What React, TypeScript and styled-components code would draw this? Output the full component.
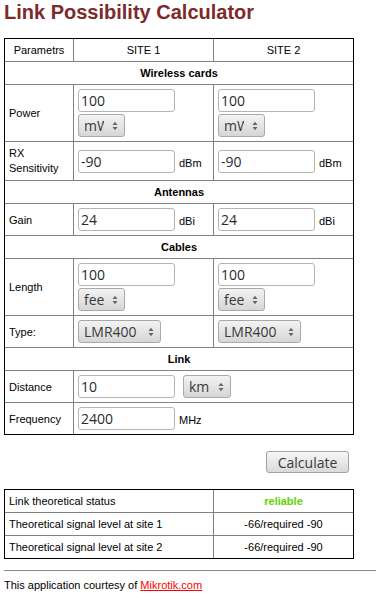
import React, { useState } from 'react';
import styled, { createGlobalStyle } from 'styled-components';

const GlobalStyle = createGlobalStyle`
  body {
    margin: 0 0 0 4px;
    background: #fff;
    color: #000;
    font-family: "Liberation Sans", Arial, sans-serif;
    font-size: 11px;
    overflow: hidden;
  }
`;

const Title = styled.h1`
  margin: 1px 0 14px;
  font-size: 20px;
  line-height: 23px;
  font-weight: bold;
  color: #7d2a2a;
`;

const Grid = styled.table`
  width: 350px;
  table-layout: fixed;
  border-collapse: separate;
  border-spacing: 0;
  border: 1px solid #000;
  box-sizing: border-box;

  tr:last-child > td {
    border-bottom: none;
  }
`;

const Col = styled.col<{ $w: number }>`
  width: ${(p) => p.$w}px;
`;

const Cell = styled.td<{ $align?: string; $bold?: boolean }>`
  border-right: 1px solid #808080;
  border-bottom: 1px solid #808080;
  padding: 4px;
  line-height: 14px;
  font-size: 11px;
  text-align: ${(p) => p.$align || 'left'};
  font-weight: ${(p) => (p.$bold ? 'bold' : 'normal')};
  vertical-align: middle;

  &:last-child {
    border-right: none;
  }
`;

const WrapLabel = styled.span`
  line-height: 15px;
`;

const Stack = styled.div`
  display: flex;
  flex-direction: column;
  align-items: flex-start;
  gap: 2px;
`;

const Row = styled.div<{ $gap: number }>`
  display: flex;
  align-items: baseline;
  gap: ${(p) => p.$gap}px;
`;

const TextInput = styled.input`
  box-sizing: border-box;
  width: 97px;
  height: 23px;
  padding: 0 2px;
  border: 1px solid #b4b4b4;
  border-radius: 3px;
  background: #fff;
  font-family: "Open Sans", "DejaVu Sans", sans-serif;
  font-size: 14px;
  color: #2b2b2b;
  outline: none;
`;

const Unit = styled.span`
  font-size: 11px;
`;

const SelectBox = styled.span`
  position: relative;
  display: inline-block;
`;

const Select = styled.select<{ $w: number }>`
  appearance: none;
  -webkit-appearance: none;
  box-sizing: border-box;
  width: ${(p) => p.$w}px;
  height: 23px;
  padding: 0 20px 0 5px;
  border: 1px solid #a9a9a9;
  border-radius: 3px;
  background: linear-gradient(#f3f3f3, #d6d6d6);
  font-family: "Open Sans", "DejaVu Sans", sans-serif;
  font-size: 14px;
  color: #3a3a3a;
  outline: none;
`;

const Arrows = styled.svg`
  position: absolute;
  right: 7px;
  top: 50%;
  transform: translateY(-50%);
  pointer-events: none;
`;

const Actions = styled.div`
  width: 350px;
  display: flex;
  justify-content: flex-end;
  box-sizing: border-box;
  padding-right: 5px;
  margin: 16px 0;
`;

const Button = styled.button`
  box-sizing: border-box;
  width: 83px;
  height: 22px;
  padding: 0;
  border: 1px solid #a2a2a2;
  border-radius: 3px;
  background: linear-gradient(#f7f7f7, #d9d9d9);
  font-family: "Open Sans", "DejaVu Sans", sans-serif;
  font-size: 14px;
  color: #3a3a3a;
`;

const Status = styled.span`
  color: #5fd400;
  font-weight: bold;
`;

const Rule = styled.div`
  margin-top: 11px;
  border-top: 1px solid #888;
`;

const Footer = styled.p`
  margin: 8px 0 0;
  font-size: 11px;
  line-height: 13px;
`;

const Link = styled.a`
  color: #f00;
  text-decoration: underline;
`;

function Dropdown({ width, value, options }: { width: number; value: string; options: string[] }) {
  const [v, setV] = useState(value);
  return (
    <SelectBox>
      <Select $w={width} value={v} onChange={(e) => setV(e.target.value)}>
        {options.map((o) => (
          <option key={o} value={o}>{o}</option>
        ))}
      </Select>
      <Arrows width="6" height="12" viewBox="0 0 6 12">
        <path d="M0.5 5 L3 1.8 L5.5 5 Z" fill="#666" />
        <path d="M0.5 7 L3 10.2 L5.5 7 Z" fill="#666" />
      </Arrows>
    </SelectBox>
  );
}

function Field({ value }: { value: string }) {
  const [v, setV] = useState(value);
  return <TextInput type="text" value={v} onChange={(e) => setV(e.target.value)} />;
}

function Section({ title }: { title: string }) {
  return (
    <tr>
      <Cell colSpan={3} $align="center" $bold>{title}</Cell>
    </tr>
  );
}

function PowerCell() {
  return (
    <Cell>
      <Stack>
        <Field value="100" />
        <Dropdown width={47} value="mW" options={['mW', 'dBm', 'W']} />
      </Stack>
    </Cell>
  );
}

function UnitCell({ value, unit }: { value: string; unit: string }) {
  return (
    <Cell>
      <Row $gap={4}>
        <Field value={value} />
        <Unit>{unit}</Unit>
      </Row>
    </Cell>
  );
}

function LengthCell() {
  return (
    <Cell>
      <Stack>
        <Field value="100" />
        <Dropdown width={47} value="feet" options={['feet', 'meters']} />
      </Stack>
    </Cell>
  );
}

function CableCell() {
  return (
    <Cell>
      <Dropdown width={83} value="LMR400" options={['LMR400', 'LMR240', 'LMR600']} />
    </Cell>
  );
}

export default function App() {
  return (
    <>
      <GlobalStyle />
      <Title>Link Possibility Calculator</Title>
      <Grid>
        <colgroup>
          <Col $w={69} />
          <Col $w={140} />
          <Col $w={139} />
        </colgroup>
        <tbody>
          <tr>
            <Cell $align="center">Parametrs</Cell>
            <Cell $align="center">SITE 1</Cell>
            <Cell $align="center">SITE 2</Cell>
          </tr>
          <Section title="Wireless cards" />
          <tr>
            <Cell>Power</Cell>
            <PowerCell />
            <PowerCell />
          </tr>
          <tr>
            <Cell><WrapLabel>RX Sensitivity</WrapLabel></Cell>
            <UnitCell value="-90" unit="dBm" />
            <UnitCell value="-90" unit="dBm" />
          </tr>
          <Section title="Antennas" />
          <tr>
            <Cell>Gain</Cell>
            <UnitCell value="24" unit="dBi" />
            <UnitCell value="24" unit="dBi" />
          </tr>
          <Section title="Cables" />
          <tr>
            <Cell>Length</Cell>
            <LengthCell />
            <LengthCell />
          </tr>
          <tr>
            <Cell>Type:</Cell>
            <CableCell />
            <CableCell />
          </tr>
          <Section title="Link" />
          <tr>
            <Cell>Distance</Cell>
            <Cell colSpan={2}>
              <Row $gap={8}>
                <Field value="10" />
                <Dropdown width={48} value="km" options={['km', 'miles']} />
              </Row>
            </Cell>
          </tr>
          <tr>
            <Cell>Frequency</Cell>
            <Cell colSpan={2}>
              <Row $gap={4}>
                <Field value="2400" />
                <Unit>MHz</Unit>
              </Row>
            </Cell>
          </tr>
        </tbody>
      </Grid>
      <Actions>
        <Button type="button">Calculate</Button>
      </Actions>
      <Grid>
        <colgroup>
          <Col $w={209} />
          <Col $w={139} />
        </colgroup>
        <tbody>
          <tr>
            <Cell>Link theoretical status</Cell>
            <Cell $align="center"><Status>reliable</Status></Cell>
          </tr>
          <tr>
            <Cell>Theoretical signal level at site 1</Cell>
            <Cell $align="center">-66/required -90</Cell>
          </tr>
          <tr>
            <Cell>Theoretical signal level at site 2</Cell>
            <Cell $align="center">-66/required -90</Cell>
          </tr>
        </tbody>
      </Grid>
      <Rule />
      <Footer>
        This application courtesy of <Link href="#mikrotik">Mikrotik.com</Link>
      </Footer>
    </>
  );
}
